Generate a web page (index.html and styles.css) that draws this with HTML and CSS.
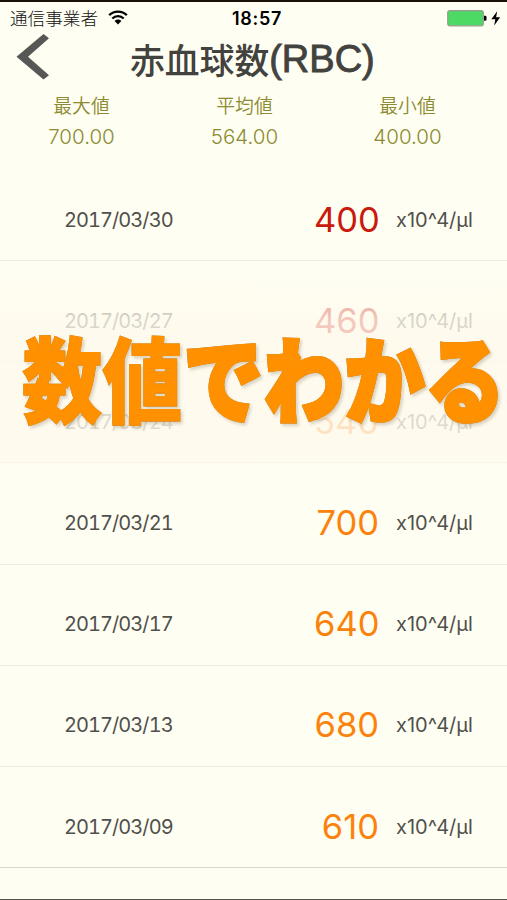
FILE: index.html
```
<!DOCTYPE html>
<html lang="ja">
<head>
<meta charset="utf-8">
<title>赤血球数(RBC)</title>
<link rel="stylesheet" href="styles.css">
</head>
<body>
<main class="screen">
  <div class="status">
    <div class="carrier"><span>通信事業者</span>
      <svg class="wifi" width="20" height="15" viewBox="0 0 20 15" fill="none" stroke="#000" stroke-width="2.3"><path d="M1.2 5.1a12.7 12.7 0 0 1 17.6 0M4.3 8.5a8.2 8.2 0 0 1 11.4 0"/><path d="M6.6 11a4.8 4.8 0 0 1 6.8 0L10 14.4z" fill="#000" stroke="none"/></svg>
    </div>
    <div class="clock">18:57</div>
    <div class="power">
      <svg width="54" height="17" viewBox="0 0 54 17"><rect x=".7" y=".7" width="35.6" height="15.1" rx="2" fill="#4cd964" stroke="#999d91" stroke-width="1.2"/><path d="M37 5.7h1.2q1.3 0 1.3 1.3v2.4q0 1.3-1.3 1.3H37z"/><path d="M50.2 1.2l-5.9 8h4l-1.1 6.3 6-8.3h-4.1z"/></svg>
    </div>
  </div>
  <header class="header">
    <svg class="back" width="34" height="46" viewBox="0 0 34 46"><path d="M27.5 0L33 4.3 12 22.7 33 41.2 27.5 45.5.5 22.7z" fill="#575755"/></svg>
    <h1 class="title"><span>赤血球数</span><span class="latin">(RBC)</span></h1>
  </header>
  <section class="stats">
    <div class="stat"><span class="label">最大値</span><span class="figure">700.00</span></div>
    <div class="stat"><span class="label">平均値</span><span class="figure">564.00</span></div>
    <div class="stat"><span class="label">最小値</span><span class="figure">400.00</span></div>
  </section>
  <section class="list">
    <div class="row"><span class="date">2017/03/30</span><span class="value low">400</span><span class="unit">x10^4/µl</span></div>
    <div class="row"><span class="date">2017/03/27</span><span class="value low">460</span><span class="unit">x10^4/µl</span></div>
    <div class="row"><span class="date">2017/03/24</span><span class="value">540</span><span class="unit">x10^4/µl</span></div>
    <div class="row"><span class="date">2017/03/21</span><span class="value">700</span><span class="unit">x10^4/µl</span></div>
    <div class="row"><span class="date">2017/03/17</span><span class="value">640</span><span class="unit">x10^4/µl</span></div>
    <div class="row"><span class="date">2017/03/13</span><span class="value">680</span><span class="unit">x10^4/µl</span></div>
    <div class="row"><span class="date">2017/03/09</span><span class="value">610</span><span class="unit">x10^4/µl</span></div>
  </section>
  <div class="banner"><span class="caption">数値<span class="kana">でわかる</span></span></div>
</main>
</body>
</html>
```
FILE: styles.css
```
* { box-sizing: border-box; }
body { margin: 0; background: #fffef2; }
.screen {
  position: relative;
  width: 507px;
  height: 900px;
  overflow: hidden;
  background: #fffef2;
  border-top: 2px solid #17110a;
  border-bottom: 1px solid #55544d;
  font-family: Inter, "Noto Sans CJK JP", sans-serif;
  color: #50504c;
}
.status {
  display: grid;
  grid-template-columns: 1fr 60px 1fr;
  align-items: center;
  height: 32px;
  padding: 0 6px 0 10px;
  color: #000;
}
.carrier {
  display: flex;
  align-items: center;
  gap: 10px;
  font: 300 17.6px/24px "Noto Sans CJK JP", sans-serif;
  color: #111;
}
.wifi { margin-top: -2px; }
.clock { margin-left: 3px; font-size: 18px; font-weight: 600; text-align: center; letter-spacing: .7px; }
.power { display: flex; justify-content: flex-end; }
.header { display: flex; height: 55px; padding-left: 16px; }
.back { flex: none; }
.title {
  display: flex;
  margin: 0 0 0 80px;
  font: 500 34.8px/50px "Noto Sans CJK JP", sans-serif;
  color: #42423f;
}
.latin { font-family: "Liberation Sans", sans-serif; font-size: 38px; -webkit-text-stroke: .9px #42423f; }
.stats {
  display: grid;
  grid-template-columns: repeat(3, 163px);
  height: 71px;
  color: #8b8b31;
}
.stat { display: flex; flex-direction: column; align-items: center; }
.label { font: 350 18.8px/31px "Noto Sans CJK JP", sans-serif; }
.figure { font-size: 20.5px; line-height: 33px; font-weight: 300; }
.row {
  display: grid;
  grid-template-columns: 250px 65px 1fr;
  align-items: start;
  height: 101.17px;
  padding: 38.6px 0 0 64px;
  border-bottom: 1px solid #ececE6;
}
.row:last-child { border-bottom-color: #d7d8d0; }
.date, .unit { font-size: 20px; line-height: 43px; }
.date { font-variant-numeric: tabular-nums; letter-spacing: -.95px; }
.unit { padding-left: 17px; }
.value { font-size: 34.5px; line-height: 42px; text-align: right; color: #fb820c; }
.low { color: #ca190d; }
.banner {
  position: absolute;
  left: 0;
  top: 270px;
  width: 507px;
  height: 193px;
  background: linear-gradient(#fffcf000, #fffbefb0 18%, #fef9edc8 25%, #fef9edd0 90%, #fffbeeb0);
}
.caption {
  position: absolute;
  left: 22px;
  top: 45px;
  font: 900 80px/116px "Noto Sans CJK JP", sans-serif;
  letter-spacing: .6px;
  white-space: nowrap;
  color: #ff9000;
  -webkit-text-stroke: 1px #ff9000;
  filter: drop-shadow(0 0 .4px #a47b31) drop-shadow(2px 2px 1.5px #77664444);
  transform: scaleY(1.16);
}
.kana { -webkit-text-stroke-width: 3px; }
```
